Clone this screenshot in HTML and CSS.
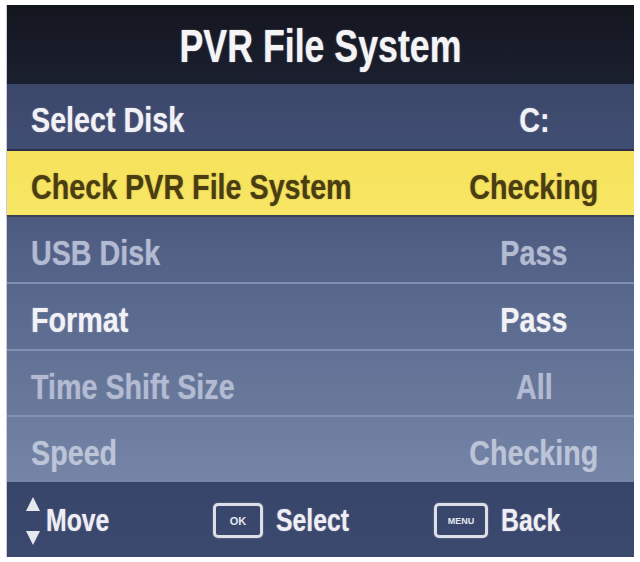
FILE: index.html
```html
<!DOCTYPE html>
<html>
<head>
<meta charset="utf-8">
<link rel="stylesheet" href="styles.css">
</head>
<body>
<div class="panel">
  <div class="header"><span class="title">PVR File System</span></div>
  <div class="list">
    <div class="row row-1"><span class="label">Select Disk</span><span class="value">C:</span></div>
    <div class="row row-sel"><span class="label">Check PVR File System</span><span class="value">Checking</span></div>
    <div class="row row-3 dim"><span class="label">USB Disk</span><span class="value">Pass</span></div>
    <div class="row row-4"><span class="label">Format</span><span class="value">Pass</span></div>
    <div class="row row-5 dim"><span class="label">Time Shift Size</span><span class="value">All</span></div>
    <div class="row row-6 dim"><span class="label">Speed</span><span class="value">Checking</span></div>
  </div>
  <div class="footer">
    <div class="hint">
      <span class="arrows"><span class="tri up"></span><span class="tri down"></span></span>
      <span class="hint-text">Move</span>
    </div>
    <div class="hint">
      <span class="key key-ok">OK</span>
      <span class="hint-text">Select</span>
    </div>
    <div class="hint">
      <span class="key key-menu">MENU</span>
      <span class="hint-text">Back</span>
    </div>
  </div>
</div>
</body>
</html>
```
FILE: styles.css
```css
html, body {
  margin: 0;
  padding: 0;
  background: #ffffff;
}

body {
  font-family: "Liberation Sans", Arial, sans-serif;
  font-weight: bold;
}

.panel {
  margin: 5px 6px 0 6px;
  width: 628px;
  height: 552px;
  display: flex;
  flex-direction: column;
  border-left: 1px solid #c9ccd6;
  box-sizing: border-box;
}

.header {
  height: 79px;
  flex: none;
  display: flex;
  align-items: center;
  justify-content: center;
  background: linear-gradient(#14161f, #1b2030);
  color: #f4f4f7;
  font-size: 47px;
  padding-top: 2px;
  box-sizing: border-box;
}

.title {
  display: inline-block;
  transform: scaleX(0.76);
  text-shadow: 0 0 1.5px rgba(255,255,255,0.6);
  white-space: nowrap;
}

.list {
  flex: 1;
  display: flex;
  flex-direction: column;
}

.row {
  flex: 1;
  display: grid;
  grid-template-columns: 1fr 200px;
  align-items: center;
  font-size: 35px;
  color: #f2f2f6;
  border-bottom: 2px solid #8090b2;
  padding-top: 7px;
  box-sizing: border-box;
  text-shadow: 0 0 1.5px rgba(255,255,255,0.5);
  white-space: nowrap;
}

.label {
  justify-self: start;
  margin-left: 24px;
  transform: scaleX(0.82);
  transform-origin: left center;
}

.value {
  justify-self: center;
  transform: scaleX(0.82);
  transform-origin: center center;
}

.row-1 {
  background: linear-gradient(#3b4769, #414e74);
  border-bottom: 2px solid #2b3048;
}

.row-sel {
  background: linear-gradient(#f6e25a, #f8e666);
  color: #4b3d12;
  text-shadow: 0 0 1.5px rgba(75,61,18,0.5);
  border-bottom: 2px solid #3a3f52;
}

.row-3 {
  background: linear-gradient(#4c5a80, #56658a);
}

.row-4 {
  background: linear-gradient(#57678c, #5f6f94);
}

.row-5 {
  background: linear-gradient(#627296, #6a7a9c);
}

.row-6 {
  background: linear-gradient(#6c7c9f, #7585a6);
  border-bottom: none;
}

.dim {
  color: #b3bbd2;
  text-shadow: 0 0 1.5px rgba(180,188,210,0.5);
}

.row-6.dim {
  color: #bcc4d8;
}

.footer {
  height: 75px;
  flex: none;
  display: grid;
  grid-template-columns: 187px 221px auto;
  align-items: center;
  padding-left: 19px;
  padding-top: 2px;
  background: linear-gradient(#38456a, #3c496e);
  color: #eeeef4;
  font-size: 31px;
  box-sizing: border-box;
  white-space: nowrap;
}

.hint {
  display: flex;
  align-items: center;
}

.hint-text {
  display: inline-block;
  transform: scaleX(0.8);
  transform-origin: left center;
  text-shadow: 0 0 1.5px rgba(255,255,255,0.5);
}

.arrows {
  display: flex;
  flex-direction: column;
  justify-content: space-between;
  height: 48px;
  margin-right: 6px;
}

.tri {
  width: 0;
  height: 0;
  border-left: 7px solid transparent;
  border-right: 7px solid transparent;
}

.tri.up {
  border-bottom: 14px solid #e6e8f0;
}

.tri.down {
  border-top: 14px solid #e6e8f0;
}

.key {
  display: flex;
  align-items: center;
  justify-content: center;
  height: 35px;
  border: 3px solid #dcdfe8;
  border-radius: 5px;
  box-sizing: border-box;
  font-size: 11px;
  color: #e4e6ee;
  margin-right: 13px;
  box-shadow: 0 0 1.5px rgba(255,255,255,0.5);
}

.key-ok {
  width: 50px;
}

.key-menu {
  width: 54px;
  font-size: 9px;
}
```
